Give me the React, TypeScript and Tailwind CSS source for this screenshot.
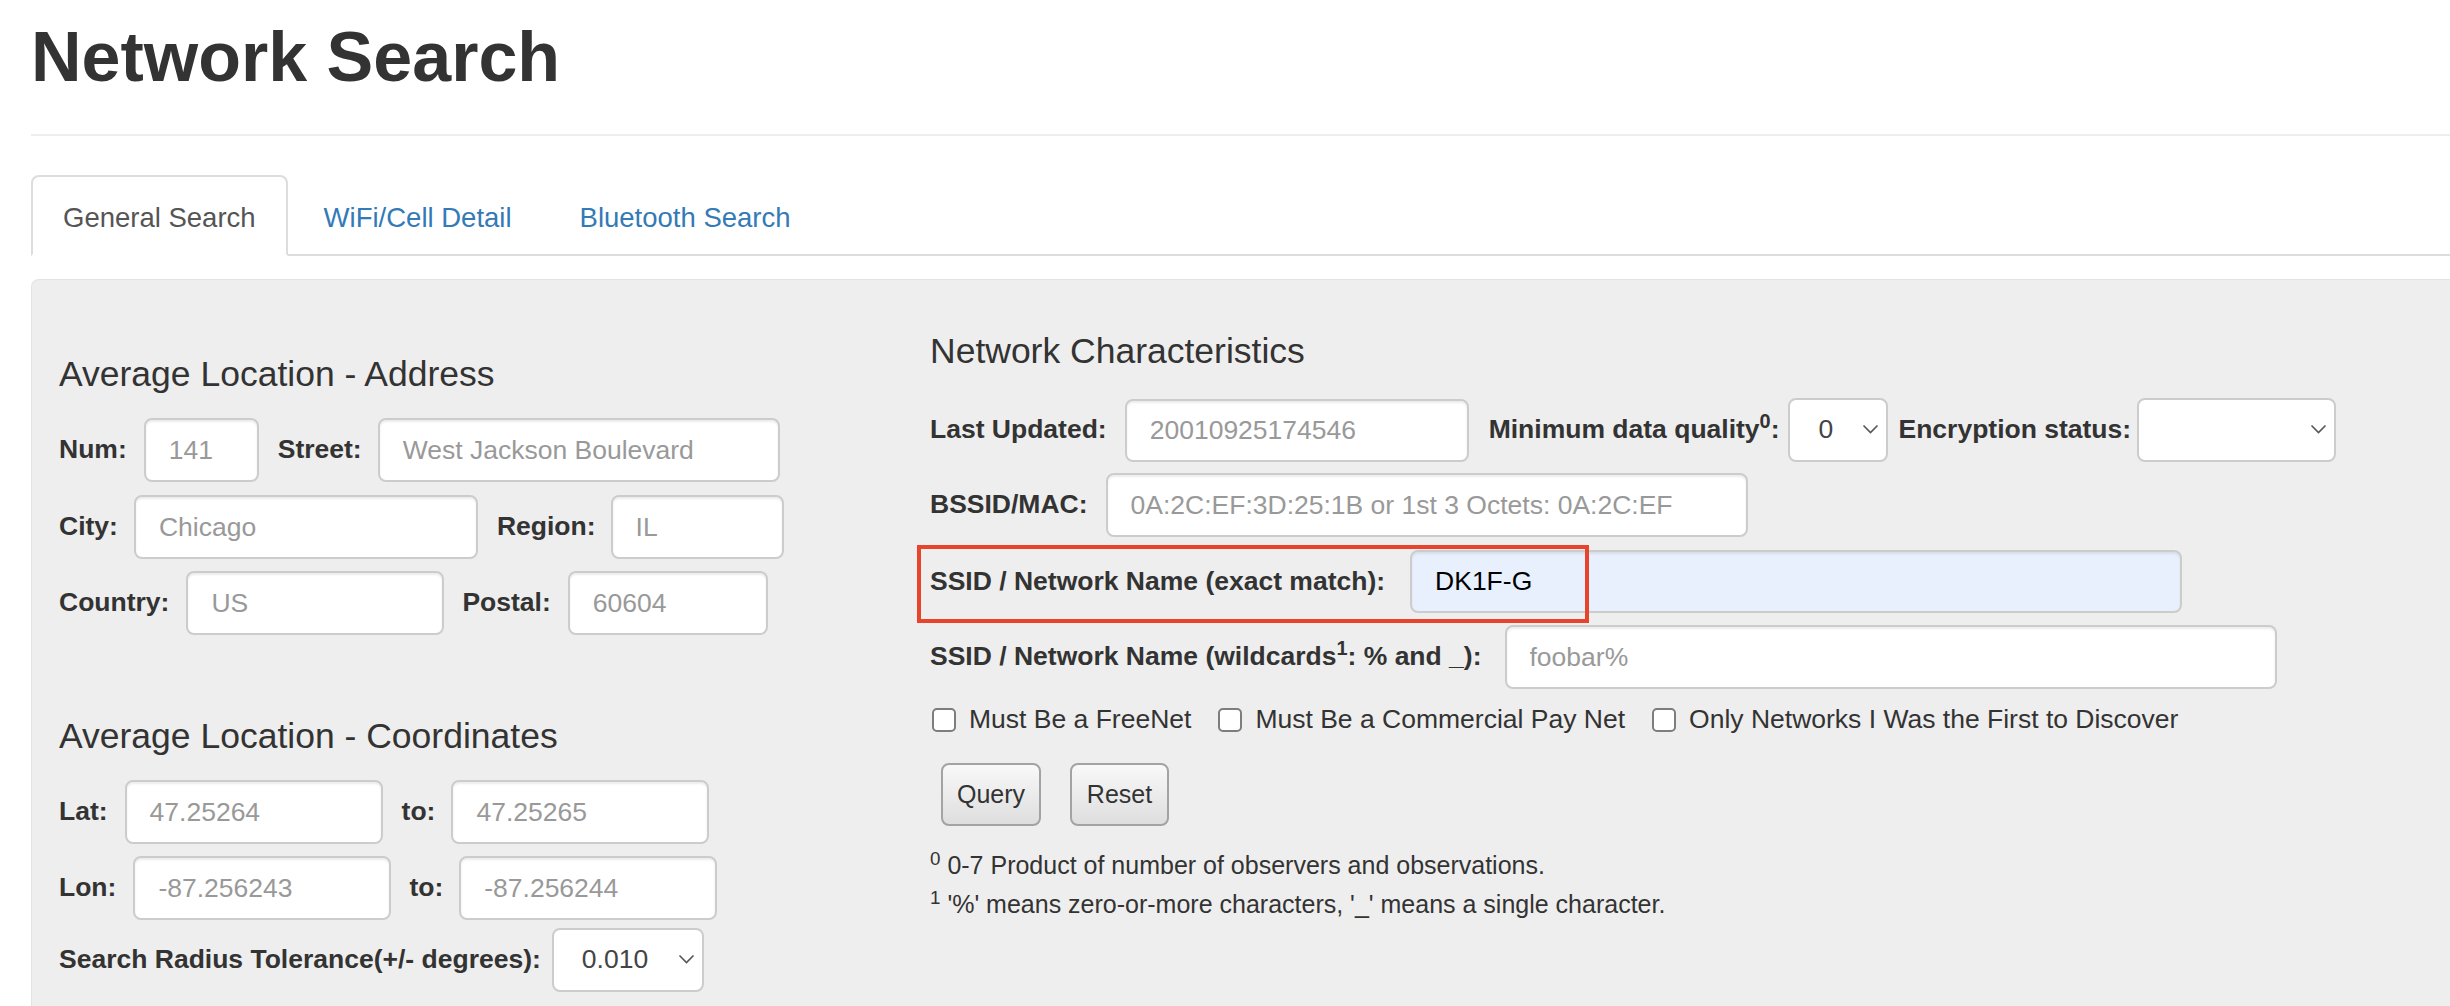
import React from "react";

const inputCls =
  "h-[64px] shrink-0 rounded-[8px] border-2 border-[#cccccc] bg-white px-[23px] text-[26.5px] text-[#555] shadow-[inset_0_2px_2px_rgba(0,0,0,0.075)] outline-none placeholder:text-[#999]";

function Field({ w, ph, className = "" }: { w: string; ph: string; className?: string }) {
  return <input className={`${inputCls} ${w} ${className}`} placeholder={ph} readOnly />;
}

function Label({ children, className = "" }: { children: React.ReactNode; className?: string }) {
  return <label className={`shrink-0 font-bold text-[#333] ${className}`}>{children}</label>;
}

function Select({ w, value, className = "" }: { w: string; value: string; className?: string }) {
  return (
    <div className={`relative h-[64px] shrink-0 ${w} ${className}`}>
      <div className="flex h-full w-full items-center rounded-[8px] border-2 border-[#cccccc] bg-white pl-[28px] text-[26.5px] text-[#444]">
        {value}
      </div>
      <svg
        className="absolute right-[9px] top-[25px] h-[12px] w-[17px]"
        viewBox="0 0 17 12"
        fill="none"
        stroke="#555"
        strokeWidth="1.6"
      >
        <path d="M1.5 2.5 L8.5 9.5 L15.5 2.5" />
      </svg>
    </div>
  );
}

function Check({ label, className = "" }: { label: string; className?: string }) {
  return (
    <div className={`flex items-center ${className}`}>
      <span className="h-[24px] w-[24px] shrink-0 rounded-[5px] border-2 border-[#7d7d7d] bg-white" />
      <span className="ml-[13px] text-[#333]">{label}</span>
    </div>
  );
}

export default function App() {
  return (
    <div className="h-screen w-full overflow-hidden bg-white font-['Liberation_Sans',Arial,sans-serif] text-[26.5px] leading-[1.42857] text-[#333]">
      <div className="pl-[31px]">
        <h1 className="mt-[19px] text-[70px] font-bold leading-[1.1] text-[#333]">Network Search</h1>
        <div className="mt-[38px] h-[2px] w-full bg-[#eeeeee]" />

        {/* Tabs */}
        <ul className="mt-[39px] flex border-b-2 border-[#dddddd] text-[27.5px]">
          <li className="-mb-[2px] mr-[4px]">
            <a className="block rounded-t-[8px] border-2 border-[#dddddd] border-b-transparent bg-white px-[30px] pb-[17px] pt-[21px] text-[#555]">
              General Search
            </a>
          </li>
          <li className="-mb-[2px] mr-[4px]">
            <a className="block border-2 border-transparent px-[30px] pb-[17px] pt-[21px] text-[#337ab7]">
              WiFi/Cell Detail
            </a>
          </li>
          <li className="-mb-[2px] mr-[4px]">
            <a className="block border-2 border-transparent px-[30px] pb-[17px] pt-[21px] text-[#337ab7]">
              Bluetooth Search
            </a>
          </li>
        </ul>

        {/* Well */}
        <div className="mt-[23px] flex h-[900px] rounded-tl-[8px] border-l border-t border-[#e3e3e3] bg-[#eeeeee] pl-[27px]">
          {/* Left column */}
          <div className="w-[871px] shrink-0 pt-[75px]">
            <h4 className="text-[35.5px] leading-[1.1] text-[#333]">Average Location - Address</h4>
            <div className="mt-[24px] flex items-center">
              <Label className="mr-[17px]">Num:</Label>
              <Field w="w-[115px]" ph="141" className="mr-[19px]" />
              <Label className="mr-[16px]">Street:</Label>
              <Field w="w-[402px]" ph="West Jackson Boulevard" />
            </div>
            <div className="mt-[13px] flex items-center">
              <Label className="mr-[16px]">City:</Label>
              <Field w="w-[344px]" ph="Chicago" className="mr-[19px]" />
              <Label className="mr-[15px]">Region:</Label>
              <Field w="w-[173px]" ph="IL" />
            </div>
            <div className="mt-[12px] flex items-center">
              <Label className="mr-[17px]">Country:</Label>
              <Field w="w-[258px]" ph="US" className="mr-[18px]" />
              <Label className="mr-[17px]">Postal:</Label>
              <Field w="w-[200px]" ph="60604" />
            </div>

            <h4 className="mt-[82px] text-[35.5px] leading-[1.1] text-[#333]">Average Location - Coordinates</h4>
            <div className="mt-[24px] flex items-center">
              <Label className="mr-[17px]">Lat:</Label>
              <Field w="w-[258px]" ph="47.25264" className="mr-[19px]" />
              <Label className="mr-[16px]">to:</Label>
              <Field w="w-[258px]" ph="47.25265" />
            </div>
            <div className="mt-[12px] flex items-center">
              <Label className="mr-[17px]">Lon:</Label>
              <Field w="w-[258px]" ph="-87.256243" className="mr-[18px]" />
              <Label className="mr-[16px]">to:</Label>
              <Field w="w-[258px]" ph="-87.256244" />
            </div>
            <div className="mt-[8px] flex items-center">
              <Label className="mr-[11px]">Search Radius Tolerance(+/- degrees):</Label>
              <Select w="w-[152px]" value="0.010" />
            </div>
          </div>

          {/* Right column */}
          <div className="shrink-0 pt-[52px]">
            <h4 className="text-[35.5px] leading-[1.1] text-[#333]">Network Characteristics</h4>
            <div className="mt-[27px] flex items-center">
              <Label className="mr-[18px]">Last Updated:</Label>
              <Field w="w-[344px] !h-[63px]" ph="20010925174546" className="mr-[20px]" />
              <Label className="mr-[9px]">
                Minimum data quality<sup>0</sup>:
              </Label>
              <Select w="w-[100px]" value="0" className="mr-[10px]" />
              <Label className="mr-[6px]">Encryption status:</Label>
              <Select w="w-[199px]" value="" />
            </div>
            <div className="mt-[11px] flex items-center">
              <Label className="mr-[18px]">BSSID/MAC:</Label>
              <Field w="w-[642px]" ph="0A:2C:EF:3D:25:1B or 1st 3 Octets: 0A:2C:EF" />
            </div>
            <div className="relative mt-[13px] flex items-center">
              <Label className="mr-[25px]">SSID / Network Name (exact match):</Label>
              <input
                className={`${inputCls} w-[772px] !h-[63px] !bg-[#e8f0fe] !text-black`}
                defaultValue="DK1F-G"
                readOnly
              />
              <div className="pointer-events-none absolute -left-[13px] -top-[5px] h-[78px] w-[672px] border-[4px] border-[#e8432d]" />
            </div>
            <div className="mt-[12px] flex items-center">
              <Label className="mr-[23px]">
                SSID / Network Name (wildcards<sup>1</sup>: % and _):
              </Label>
              <Field w="w-[772px]" ph="foobar%" />
            </div>
            <div className="mt-[12px] flex h-[38px] items-center pl-[2px]">
              <Check label="Must Be a FreeNet" className="mr-[27px]" />
              <Check label="Must Be a Commercial Pay Net" className="mr-[27px]" />
              <Check label="Only Networks I Was the First to Discover" />
            </div>
            <div className="mt-[24px] flex pl-[11px]">
              <button className="mr-[29px] h-[63px] w-[100px] rounded-[8px] border-2 border-[#a3a3a3] bg-linear-to-b from-[#f9f9f9] to-[#dedede] text-[25px] text-[#333]">
                Query
              </button>
              <button className="h-[63px] w-[99px] rounded-[8px] border-2 border-[#a3a3a3] bg-linear-to-b from-[#f9f9f9] to-[#dedede] text-[25px] text-[#333]">
                Reset
              </button>
            </div>
            <p className="mt-[21px] text-[25px] leading-[36px] text-[#333]">
              <sup>0</sup> 0-7 Product of number of observers and observations.
            </p>
            <p className="mt-[3px] text-[25px] leading-[36px] text-[#333]">
              <sup>1</sup> '%' means zero-or-more characters, '_' means a single character.
            </p>
          </div>
        </div>
      </div>
    </div>
  );
}
